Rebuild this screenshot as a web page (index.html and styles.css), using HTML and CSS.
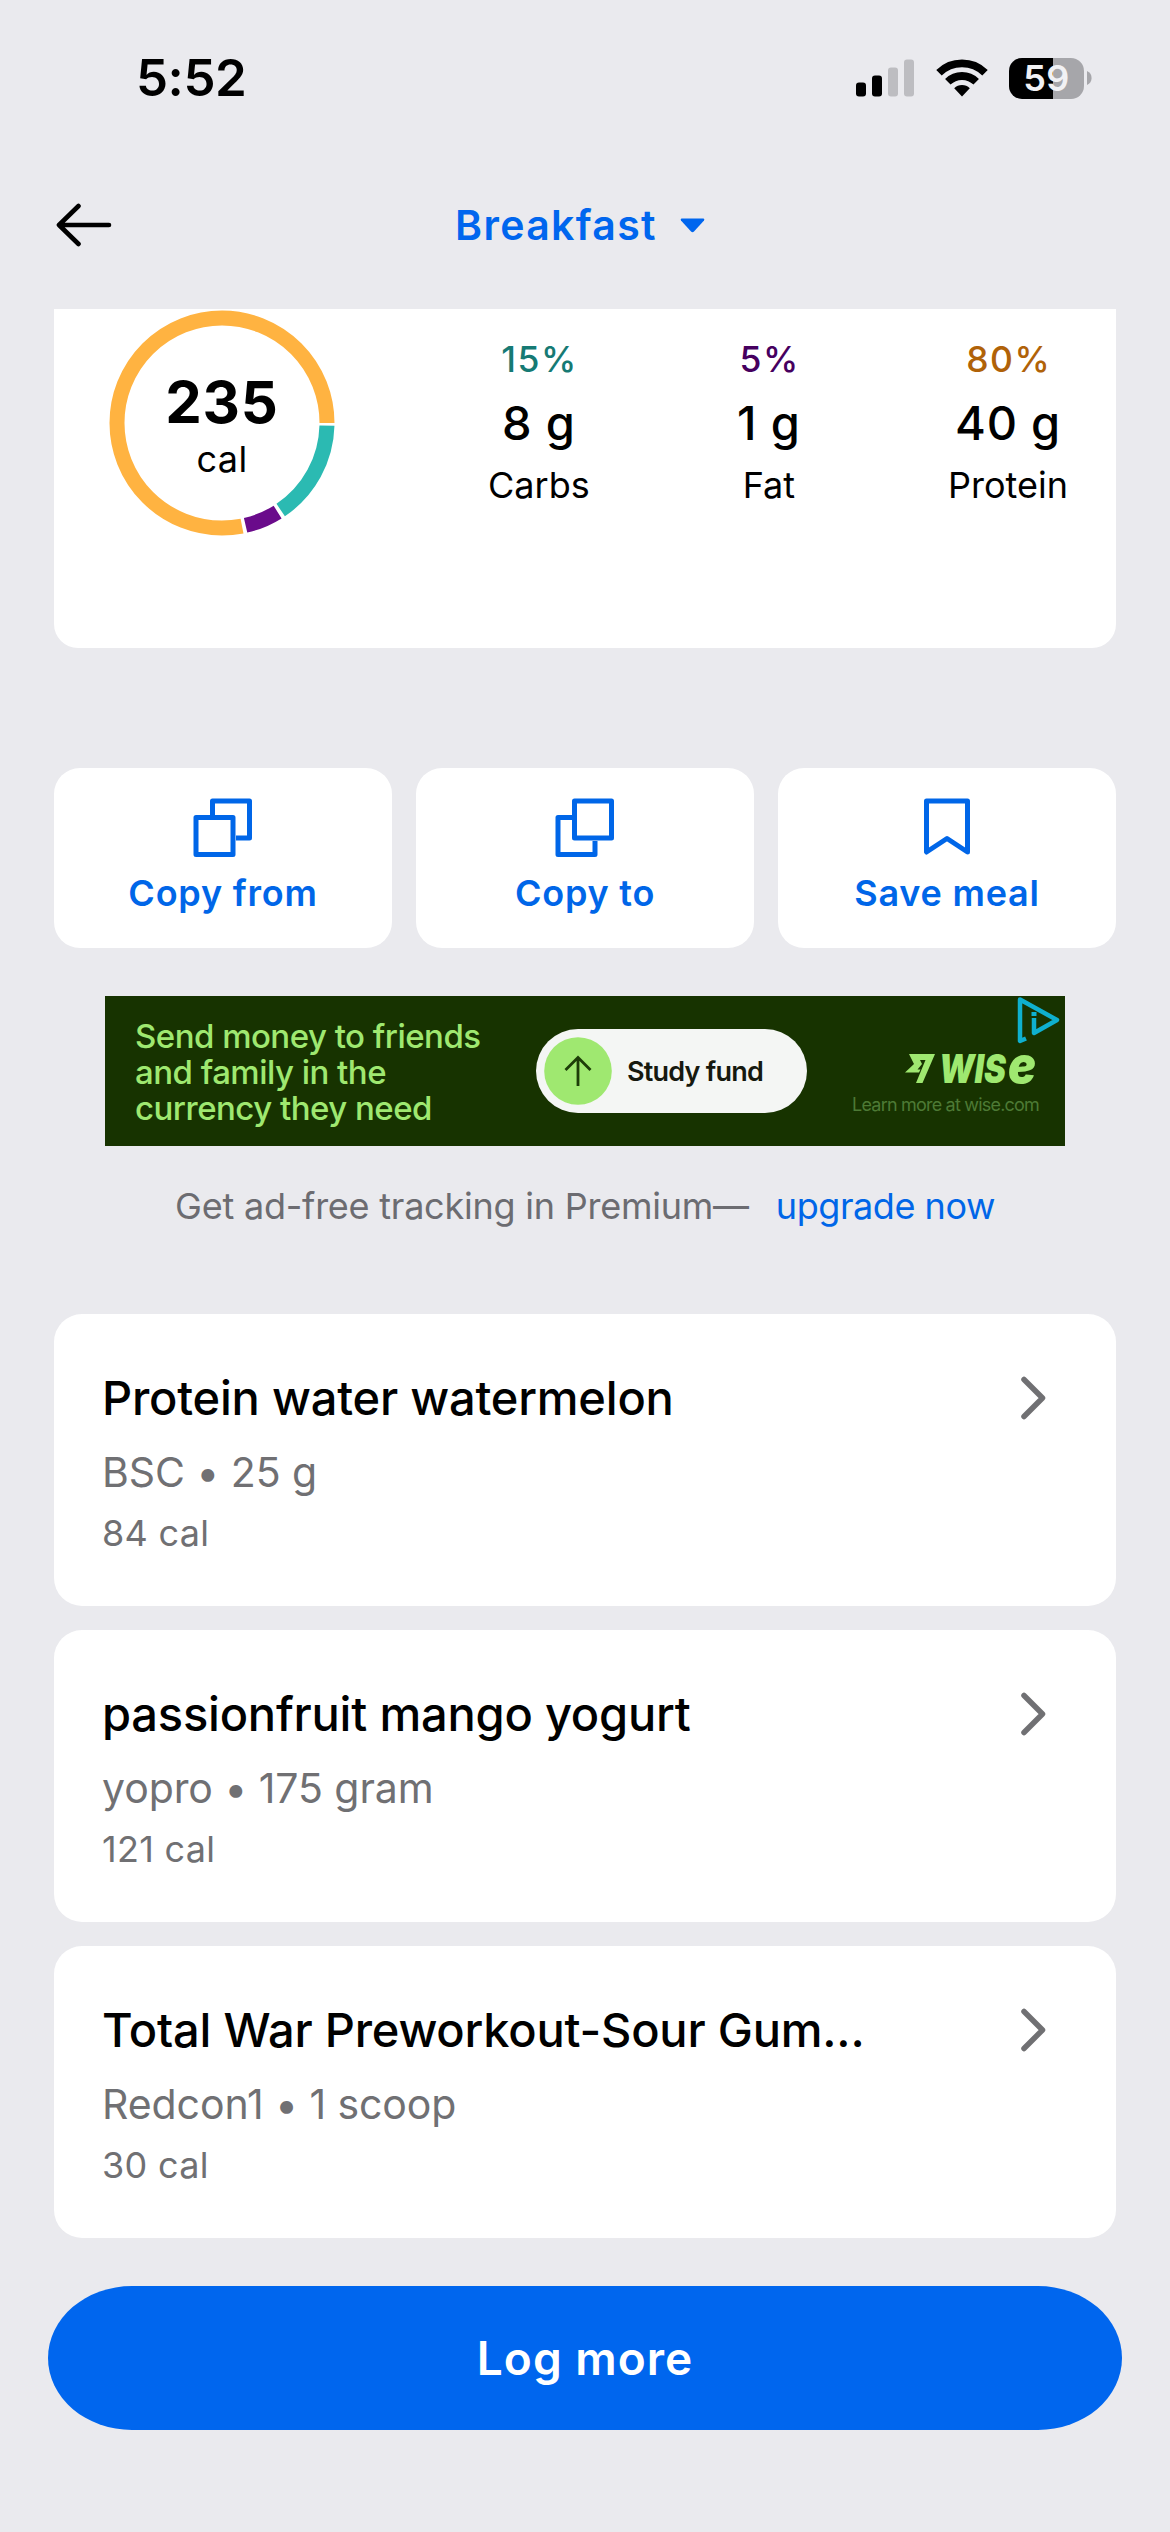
FILE: index.html
```html
<!DOCTYPE html>
<html lang="en">
<head>
<meta charset="utf-8">
<meta name="viewport" content="width=device-width">
<title>Breakfast</title>
<link rel="stylesheet" href="styles.css">
</head>
<body>
<div class="screen">
  <div class="status">
    <span class="time">5:52</span>
    <div class="indicators">
      <svg class="signal" width="58" height="38" viewBox="0 0 58 38">
        <rect x="0" y="23.5" width="10" height="14" rx="3"/>
        <rect x="16" y="16.5" width="10" height="21" rx="3"/>
        <rect class="dim" x="32" y="8.5" width="10" height="29" rx="3"/>
        <rect class="dim" x="48" y="0.5" width="10" height="37" rx="3"/>
      </svg>
      <svg class="wifi" width="52" height="38" viewBox="0 0 52 38">
        <path d="M3 13.7A33 33 0 0 1 49 13.7M11.8 22.8A20.3 20.3 0 0 1 40.2 22.8" fill="none" stroke="#000" stroke-width="7.8"/>
        <path d="M26 37.5L18.2 29.2A11.3 11.3 0 0 1 33.8 29.2Z"/>
      </svg>
      <div class="battery">
        <div class="battery-body"><span>59</span></div>
        <svg width="5" height="14" viewBox="0 0 5 14"><path d="M0 0C3 1.2 4.6 3.8 4.6 7S3 12.800 0 14Z" fill="#a6a6aa"/></svg>
      </div>
    </div>
  </div>

  <header class="nav">
    <svg class="back" width="56" height="44" viewBox="0 0 56 44" fill="none" stroke="#000" stroke-width="4.6" stroke-linecap="round" stroke-linejoin="round"><path d="M53 22H3M22.500 3L3 22L22.500 41"/></svg>
    <button class="meal">Breakfast<svg width="25" height="15" viewBox="0 0 25 15"><path d="M1.500 0.500H23.500Q25 1 24 2.500L14 13.500Q12.500 15 11 13.500L1 2.500Q0 1 1.500 0.500Z" fill="#0066ee"/></svg></button>
  </header>

  <section class="summary">
    <div class="ring">
      <svg width="226" height="226" viewBox="0 0 226 226" fill="none" stroke-width="15">
        <circle cx="113" cy="113" r="105" pathLength="360" stroke="#ffb341" stroke-dasharray="281 79" stroke-dashoffset="-79"/>
        <circle cx="113" cy="113" r="105" pathLength="360" stroke="#2bbab2" stroke-dasharray="54.5 305.5" stroke-dashoffset="-1.5"/>
        <circle cx="113" cy="113" r="105" pathLength="360" stroke="#6a0b8b" stroke-dasharray="19 341" stroke-dashoffset="-58"/>
      </svg>
      <div class="total"><strong>235</strong><span>cal</span></div>
    </div>
    <div class="macros">
      <div class="macro"><span class="pct carbs">15%</span><span class="grams">8 g</span><span class="name">Carbs</span></div>
      <div class="macro"><span class="pct fat">5%</span><span class="grams">1 g</span><span class="name">Fat</span></div>
      <div class="macro"><span class="pct protein">80%</span><span class="grams">40 g</span><span class="name">Protein</span></div>
    </div>
  </section>

  <section class="actions">
    <button class="action">
      <svg width="60" height="60" viewBox="0 0 60 60" fill="none" stroke="#0066e8" stroke-width="5" stroke-linejoin="round"><path d="M19.500 17V3H56.500V40H43M3 19.500H40V56.500H3Z"/></svg>
      Copy from
    </button>
    <button class="action">
      <svg width="60" height="60" viewBox="0 0 60 60" fill="none" stroke="#0066e8" stroke-width="5" stroke-linejoin="round"><path d="M19.500 3H56.500V40H19.500ZM17 19.500H3V56.500H40V43"/></svg>
      Copy to
    </button>
    <button class="action">
      <svg width="60" height="60" viewBox="0 0 60 60" fill="none" stroke="#0066e8" stroke-width="5"><path d="M9.500 3H50.500V54L30 40.500L9.500 54Z" stroke-linejoin="round"/></svg>
      Save meal
    </button>
  </section>

  <aside class="ad">
    <p class="ad-copy">Send money to friends<br>and family in the<br>currency they need</p>
    <div class="pill">
      <svg width="68" height="68" viewBox="0 0 68 68"><circle cx="34" cy="34" r="33.800" fill="#9fe870"/><path d="M34 49V20.500M21.500 33L34 20.500L46.500 33" fill="none" stroke="#1d3d08" stroke-width="2.800"/></svg>
      Study fund
    </div>
    <div class="brand">
      <svg width="134" height="34" viewBox="0 0 134 34">
        <path d="M4 2H30L17.500 31H11L20.500 8H15L17 12L12.500 17.500H15.500L14 20.500H0L9 12Z" fill="#9fe870"/>
        <g class="logo"><text x="34" y="31" font-size="40" textLength="67" lengthAdjust="spacingAndGlyphs">WIS</text><text x="103" y="31" font-size="50" textLength="28" lengthAdjust="spacingAndGlyphs">e</text></g>
      </svg>
      <span>Learn more at wise.com</span>
    </div>
    <svg class="adchoices" width="46" height="48" viewBox="0 0 46 48" fill="none" stroke="#0fb0cf" stroke-width="4.500" stroke-linejoin="round"><path d="M10 42.500L4 45V3.500L41 24L18 37V22"/><path d="M18 16V20" stroke-width="5"/></svg>
  </aside>

  <p class="premium"><span>Get ad-free tracking in Premium—</span><a>upgrade now</a></p>

  <ul class="foods">
    <li class="food">
      <div><h2>Protein water watermelon</h2><p class="serving">BSC • 25 g</p><p class="cals">84 cal</p></div>
      <svg width="28" height="44" viewBox="0 0 28 44"><path d="M4 3.500L22.500 22L4 40.500"/></svg>
    </li>
    <li class="food">
      <div><h2>passionfruit mango yogurt</h2><p class="serving">yopro • 175 gram</p><p class="cals">121 cal</p></div>
      <svg width="28" height="44" viewBox="0 0 28 44"><path d="M4 3.500L22.500 22L4 40.500"/></svg>
    </li>
    <li class="food">
      <div><h2>Total War Preworkout-Sour Gum...</h2><p class="serving">Redcon1 • 1 scoop</p><p class="cals">30 cal</p></div>
      <svg width="28" height="44" viewBox="0 0 28 44"><path d="M4 3.500L22.500 22L4 40.500"/></svg>
    </li>
  </ul>

  <button class="log">Log more</button>
</div>
</body>
</html>
```
FILE: styles.css
```css
* { box-sizing: border-box; margin: 0; padding: 0; }
body { background: #eaeaee; font-family: Inter, "Liberation Sans", sans-serif; color: #000; }
button { font: inherit; border: 0; background: none; }
svg { display: block; flex: none; }
.screen { width: 1170px; height: 2532px; padding: 0 54px; display: flex; flex-direction: column; overflow: hidden; }

/* Status bar */
.status { height: 156px; display: flex; align-items: center; justify-content: space-between; padding: 0 24px 0 82px; }
.time { font-size: 51px; line-height: 60px; font-weight: 600; letter-spacing: -0.47px; }
.indicators { display: flex; align-items: center; }
.signal .dim { fill: #bdbdc1; }
.wifi { margin-left: 22px; }
.battery { display: flex; align-items: center; gap: 3px; margin-left: 21px; }
.battery-body { width: 75px; height: 41px; border-radius: 13px; background: linear-gradient(90deg, #000 44px, #a6a6aa 44px); color: #f1f1f4; font-size: 36px; line-height: 41px; font-weight: 600; text-align: center; letter-spacing: 0.4px; }

/* Title bar */
.nav { height: 138px; margin-bottom: 15px; display: grid; grid-template-columns: 56px 1fr 56px; align-items: center; }
.back { margin-left: 2px; }
.meal { display: flex; align-items: center; justify-content: center; gap: 23px; padding-right: 10px; color: #0066ee; font-size: 41px; line-height: 50px; font-weight: 600; letter-spacing: 1.35px; }

/* Totals */
.summary { height: 339px; flex: none; background: #fff; border-radius: 0 0 24px 24px; padding: 1px 48px 0 55px; display: flex; justify-content: space-between; align-items: flex-start; }
.ring { display: grid; }
.ring > * { grid-area: 1 / 1; }
.total { display: flex; flex-direction: column; align-items: center; gap: 8px; padding-top: 63px; }
.total strong { font-size: 58px; line-height: 58px; font-weight: 700; letter-spacing: 0.76px; }
.total span { font-size: 36px; line-height: 40px; letter-spacing: 0.4px; }
.macros { width: 580px; padding-top: 30px; display: flex; justify-content: space-between; }
.macro { display: flex; flex-direction: column; align-items: center; }
.pct { font-size: 35.5px; line-height: 40px; font-weight: 500; letter-spacing: 1.5px; margin-right: -1.5px; }
.grams { font-size: 47px; line-height: 60px; font-weight: 500; letter-spacing: 0.8px; margin: 13px 0 12px; }
.name { font-size: 36px; line-height: 40px; }
.carbs { color: #167a74; }
.fat { color: #46005f; }
.protein { color: #b06208; }

/* Meal actions */
.actions { margin-top: 120px; display: grid; grid-template-columns: repeat(3, 1fr); gap: 24px; }
.action { height: 180px; padding-top: 30px; display: flex; flex-direction: column; align-items: center; gap: 17px; background: #fff; border-radius: 26px; color: #0066e8; font-size: 36px; line-height: 36px; font-weight: 600; letter-spacing: 0.78px; }

/* Banner */
.ad { position: relative; width: 960px; height: 150px; flex: none; margin: 48px auto 0; padding-left: 30px; display: grid; grid-template-columns: 401px 271px 1fr; align-items: center; background: #173300; color: #9fe870; }
.ad-copy { font-size: 33px; line-height: 36px; font-weight: 500; letter-spacing: -0.52px; padding-top: 1px; }
.pill { height: 84px; border-radius: 42px; background: #f4f6f4; display: flex; align-items: center; gap: 15px; padding-left: 8px; color: #16190f; font-size: 27px; font-weight: 600; letter-spacing: -0.77px; white-space: nowrap; }
.brand { display: flex; flex-direction: column; align-items: flex-end; padding: 27px 26px 0 0; }
.logo { font-weight: 900; font-style: italic; fill: #9fe870; }
.brand span { font-size: 18px; line-height: 24px; letter-spacing: -0.8px; color: #4d7a35; margin-top: 7px; white-space: nowrap; }
.adchoices { position: absolute; top: 0; right: 3px; }

.premium { display: flex; justify-content: center; gap: 27px; margin-top: 36px; font-size: 36px; line-height: 48px; letter-spacing: -0.23px; color: #6c6c71; }
.premium a { color: #0066e8; letter-spacing: -0.45px; }

/* Logged foods */
.foods { list-style: none; margin-top: 84px; display: flex; flex-direction: column; gap: 24px; }
.food { height: 292px; padding: 54px 68px 0 48px; background: #fff; border-radius: 28px; display: flex; justify-content: space-between; align-items: flex-start; color: #707073; }
.food h2 { font-size: 47px; line-height: 60px; font-weight: 500; letter-spacing: -0.2px; color: #000; }
.serving { font-size: 41px; line-height: 50px; letter-spacing: -0.08px; margin: 19px 0 14px; }
.cals { font-size: 36px; line-height: 44px; letter-spacing: 0.3px; }
.food svg { margin-top: 8px; fill: none; stroke: #707073; stroke-width: 5.5; stroke-linecap: round; stroke-linejoin: round; }

.log { height: 144px; flex: none; margin: 48px -6px 0; border-radius: 84px / 72px; background: #0066ee; color: #fff; font-size: 46px; font-weight: 600; letter-spacing: 1px; }
```
